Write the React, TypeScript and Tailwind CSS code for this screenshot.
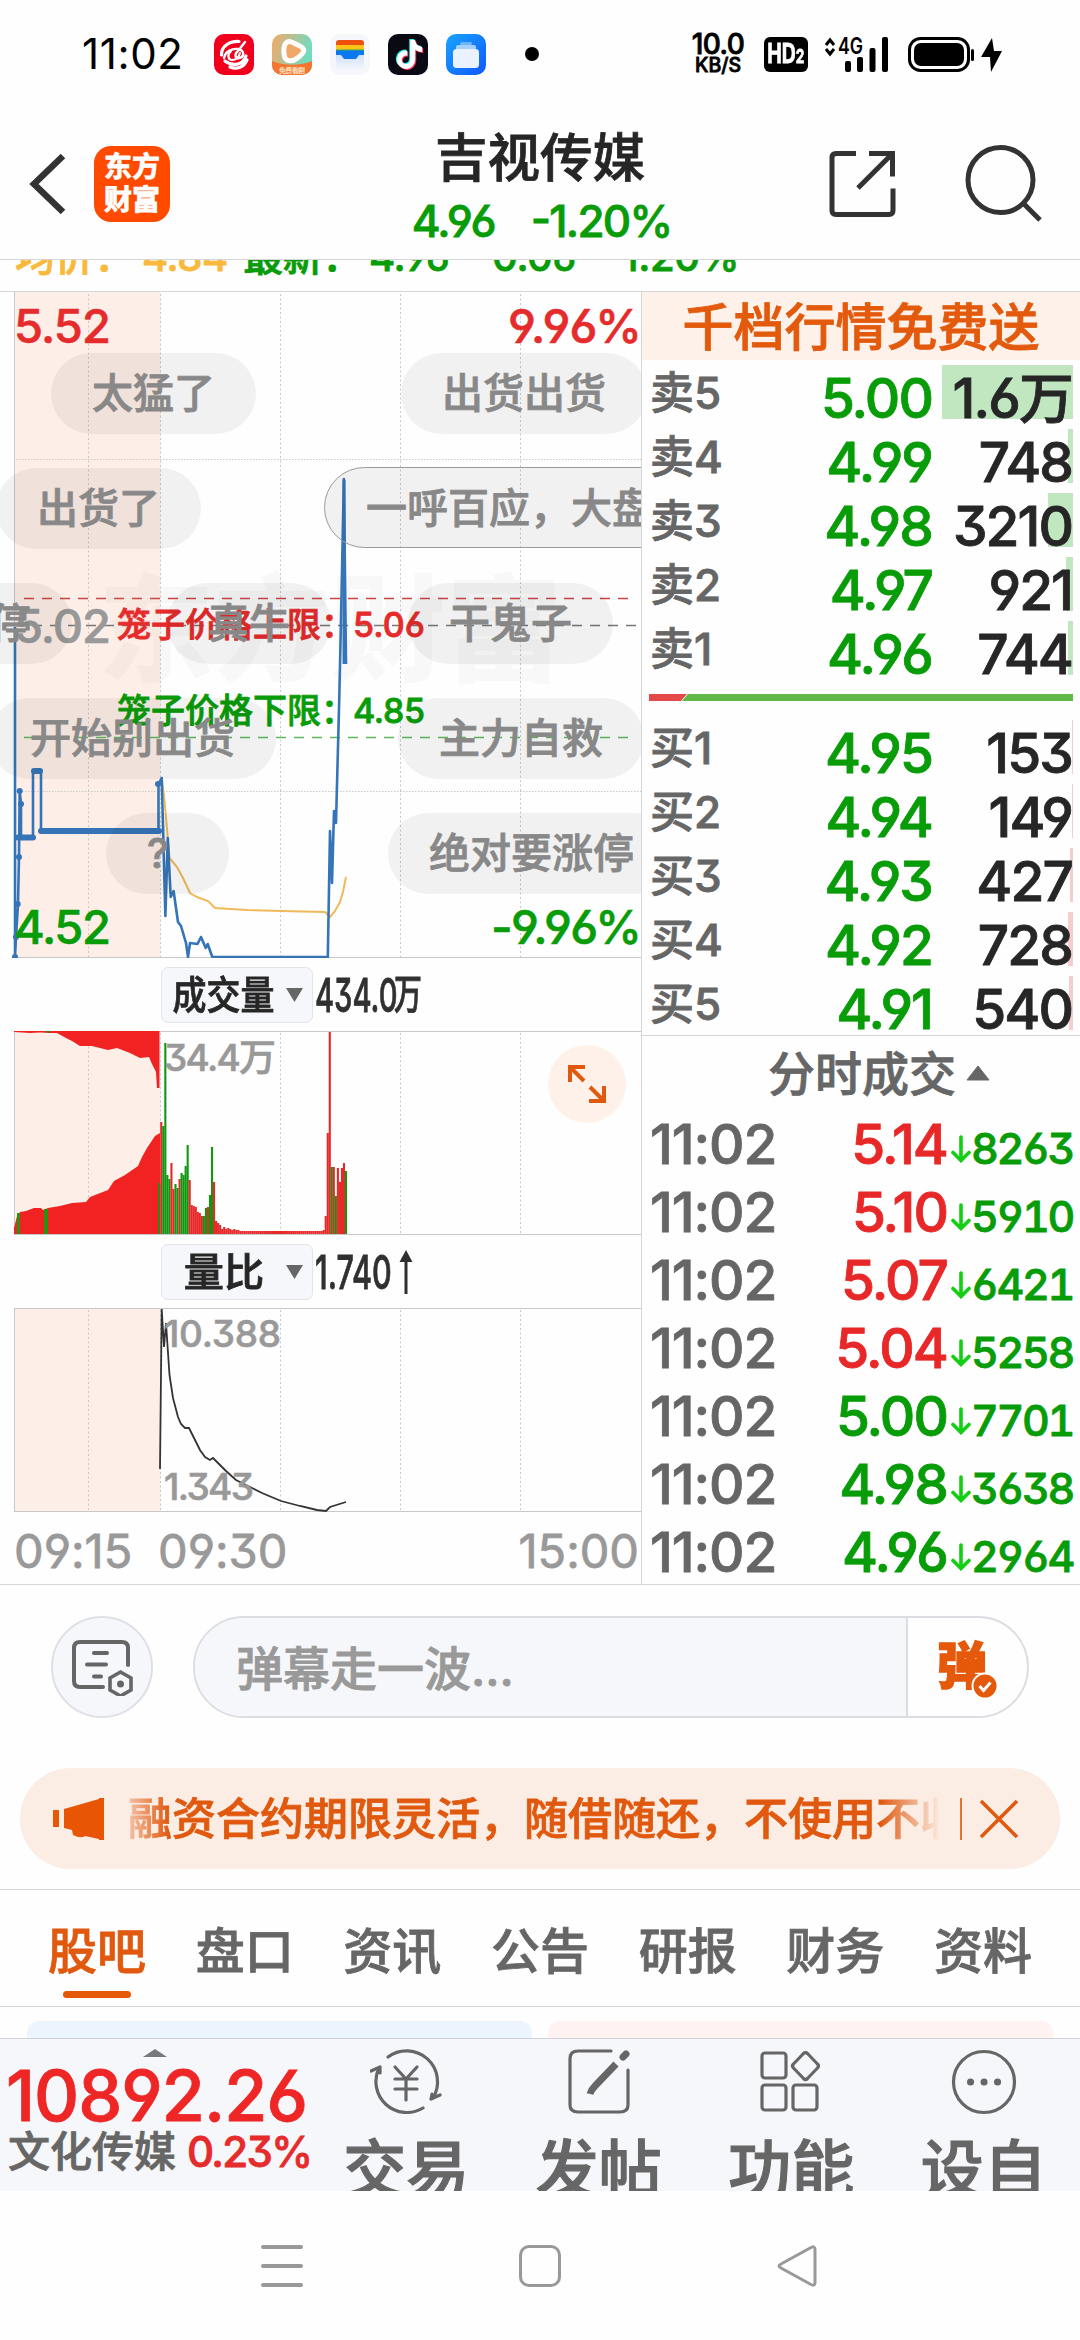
import { ReactNode } from "react";
import { FaTiktok } from "react-icons/fa";

interface Quote {
  label: string;
  price: string;
  vol: string;
  bar: number;
}

const SELLS: Quote[] = [
  { label: "卖5", price: "5.00", vol: "1.6万", bar: 131 },
  { label: "卖4", price: "4.99", vol: "748", bar: 5 },
  { label: "卖3", price: "4.98", vol: "3210", bar: 25 },
  { label: "卖2", price: "4.97", vol: "921", bar: 7 },
  { label: "卖1", price: "4.96", vol: "744", bar: 5 },
];

const BUYS: Quote[] = [
  { label: "买1", price: "4.95", vol: "153", bar: 1 },
  { label: "买2", price: "4.94", vol: "149", bar: 1 },
  { label: "买3", price: "4.93", vol: "427", bar: 3 },
  { label: "买4", price: "4.92", vol: "728", bar: 5 },
  { label: "买5", price: "4.91", vol: "540", bar: 4 },
];

const TICKS = [
  { price: "5.14", vol: "8263", up: true },
  { price: "5.10", vol: "5910", up: true },
  { price: "5.07", vol: "6421", up: true },
  { price: "5.04", vol: "5258", up: true },
  { price: "5.00", vol: "7701", up: false },
  { price: "4.98", vol: "3638", up: false },
  { price: "4.96", vol: "2964", up: false },
];

// Minute volume from 09:30, negative = falling minute
const VOLUMES = [
  -51, 112, -108, -191, -59, -55, 71, 45, -50, -46, 55, -61, -59, -68, -89, 54, 29, 28, 27, 22, 21, 18, -18, -26, 27,
  -39, -87, 52, 13, 11, 9, 5, 7, 5, 6, 5, 4, 5, 4, 4, ...Array(41).fill(3), 4, 18, 101, 202, -67, 67, -38, 66, 52, 66,
  71, -63,
];

const PILLS = [
  { text: "太猛了", x: 51, y: 353 },
  { text: "出货出货", x: 401, y: 353 },
  { text: "出货了", x: -4, y: 468 },
  { text: "一呼百应，大盘", x: 324, y: 467, outlined: true },
  { text: "涨停", x: -92, y: 583 },
  { text: "真牛", x: 167, y: 583 },
  { text: "干鬼子", x: 408, y: 583 },
  { text: "开始别出货", x: -11, y: 698 },
  { text: "主力自救", x: 398, y: 698 },
  { text: "?", x: 106, y: 813 },
  { text: "绝对要涨停", x: 388, y: 813 },
];

const GRID_X = [88.5, 160.5, 280.5, 400.5, 520.5];

const TABS = ["股吧", "盘口", "资讯", "公告", "研报", "财务", "资料"];

function StatusBar() {
  return (
    <div className="flex h-[108px] items-center pl-[82px]">
      <div className="w-[132px] text-[42px] leading-none font-normal tracking-[0.015em] text-black [-webkit-text-stroke:0px]">11:02</div>
      <div className="flex gap-[18px]">
        <svg width="40" height="41" viewBox="0 0 40 41">
          <rect width="40" height="41" rx="10" fill="#f0001c" />
          <g fill="none" stroke="#fff" strokeWidth="3.2" strokeLinecap="round">
            <path d="M25 7.500C15 7 7 13 7.500 21" />
            <path d="M10 24c1-6 8-10 14-9s7 7 2 9-6-4-2-7l7-9" strokeWidth="2.400" />
            <path d="M17 17c-4 3-3 9 1 9s7-3 8-7" strokeWidth="2.200" />
            <path d="M11 27c8 6 18 4 21-5M16 33c7 3 14 0 17-7" />
          </g>
        </svg>
        <svg width="40" height="41" viewBox="0 0 40 41">
          <defs>
            <linearGradient id="vid" x1="0" y1="0" x2="1" y2="0.3">
              <stop offset="0" stopColor="#f5a868" />
              <stop offset="1" stopColor="#6fdcc0" />
            </linearGradient>
          </defs>
          <rect width="40" height="41" rx="10" fill="url(#vid)" />
          <path d="M0 27c12 5 28 5 40 0v4a10 10 0 0 1-10 10H10A10 10 0 0 1 0 31z" fill="#f57430" />
          <path d="M14 9c3-3 6-1 12 2s8 5 3 10-10 7-14 5-4-14-1-17z" fill="#f0a868" stroke="#fff" strokeWidth="5" strokeLinejoin="round" />
          <text x="7" y="39" fontSize="7" fontWeight="700" fill="#ffe3c0" textLength="26">免费看剧</text>
        </svg>
        <svg width="40" height="41" viewBox="0 0 40 41">
          <defs>
            <linearGradient id="wal" x1="0" y1="0" x2="0" y2="1">
              <stop offset="0" stopColor="#cfdffb" />
              <stop offset="1" stopColor="#f6f7fb" />
            </linearGradient>
          </defs>
          <rect width="40" height="41" rx="10" fill="#f6f7fb" />
          <rect x="6" y="20" width="28" height="16" fill="url(#wal)" />
          <path d="M6 12V9q0-3 3-3h22q3 0 3 3v3z" fill="#ee5010" />
          <path d="M6 11h28v5H6z" fill="#fcc419" />
          <path d="M6 15.500h28v2H6z" fill="#3aa655" />
          <path d="M6 16.500h28v4.500h-5l-3 4H14l-3-4H6z" fill="#0a78f0" />
        </svg>
        <div className="relative h-[41px] w-10 rounded-[10px] bg-[#0a0a14]">
          <FaTiktok className="absolute top-[5px] left-[6px] text-[29px] text-[#25f4ee]" />
          <FaTiktok className="absolute top-[7px] left-[8px] text-[29px] text-[#fe2c55]" />
          <FaTiktok className="absolute top-[6px] left-[7px] text-[29px] text-white" />
        </div>
        <svg width="40" height="41" viewBox="0 0 40 41">
          <defs>
            <linearGradient id="fol" x1="0" y1="0" x2="1" y2="1">
              <stop offset="0" stopColor="#18a4ff" />
              <stop offset="1" stopColor="#1058fa" />
            </linearGradient>
          </defs>
          <rect width="40" height="41" rx="10" fill="url(#fol)" />
          <rect x="14" y="8" width="12" height="3" rx="1.500" fill="#6fb4ff" />
          <rect x="10" y="11" width="20" height="5" rx="2" fill="#a4cfff" />
          <rect x="7" y="15" width="26" height="19" rx="3.500" fill="#eaf2ff" />
        </svg>
      </div>
      <div className="ml-[39px] h-[14px] w-[14px] rounded-full bg-black" />
      <div className="ml-[149px] flex w-[60px] flex-col items-center font-medium text-black">
        <span className="text-[28px] leading-[23px] tracking-[-0.02em]">10.0</span>
        <span className="text-[19.500px] leading-[19px]">KB/S</span>
      </div>
      <div className="ml-[16px] flex h-[35px] w-[44px] items-center justify-center rounded-[6px] bg-black text-white">
        <span className="origin-center scale-x-[.72] text-[27px] font-bold whitespace-nowrap">
          HD<span className="text-[19px]">2</span>
        </span>
      </div>
      <svg className="ml-[16px]" width="180" height="40" viewBox="824 33 180 40">
        <path d="M826 44l4-5 4 5M826 48l4 5 4-5" fill="none" stroke="#000" strokeWidth="3" />
        <text x="838" y="53" fontSize="23" fontWeight="600" textLength="25" lengthAdjust="spacingAndGlyphs">4G</text>
        <rect x="845" y="60" width="6" height="11" rx="2" />
        <rect x="857" y="56" width="6" height="15" rx="2" />
        <rect x="869.500" y="47" width="6" height="24" rx="2" />
        <rect x="882" y="36" width="6" height="35" rx="2" />
        <rect x="909.500" y="37.500" width="59" height="32" rx="11" fill="none" stroke="#000" strokeWidth="3" />
        <rect x="914" y="42" width="50" height="23" rx="7" />
        <rect x="971" y="48" width="3" height="12" rx="1.500" />
        <path d="M992 37l-11 19h9l1 15 11-21h-8z" />
      </svg>
    </div>
  );
}

function Header() {
  return (
    <div className="flex h-[152px] items-center border-b border-[#d4d6d8] pr-[38px] pl-[28px]">
      <svg width="40" height="64" viewBox="28 152 40 64">
        <path d="M63 156L34 184l29 28" fill="none" stroke="#333" strokeWidth="6.500" />
      </svg>
      <div className="ml-[26px] flex h-[76px] w-[76px] flex-col items-center justify-center rounded-[17px] bg-[#ff4a00] text-[28px] leading-[33px] font-bold text-white">
        <span>东方</span>
        <span>财富</span>
      </div>
      <div className="ml-[200px] flex w-[340px] flex-col items-center pt-[9px]">
        <div className="text-[52.500px] leading-[60px] font-medium text-[#262626]">吉视传媒</div>
        <div className="mt-[5px] ml-[3px] flex gap-[36px] text-[44px] leading-[56px] font-medium tracking-[-0.04em] text-[#089c08] [font-feature-settings:'cv03','cv04','case']">
          <span>4.96</span>
          <span>-1.20%</span>
        </div>
      </div>
      <svg className="mt-[2px] ml-auto" width="214" height="84" viewBox="828 143 214 84" fill="none" stroke="#333" strokeWidth="5">
        <path d="M856 153.500h-20q-4 0-4 4v53q0 4 4 4h53q4 0 4-4v-22" />
        <path d="M869 153.500h23.500v23M892 154l-34 34" />
        <circle cx="1000.500" cy="180" r="32.500" />
        <path d="M1023 203l17 17" />
      </svg>
    </div>
  );
}

// Overlay line scrolled halfway under the header
function LegendStrip() {
  return (
    <div className="h-8 overflow-hidden border-b border-[#d4d6d8]">
      <div className="-mt-[29px] flex h-[52px] items-center text-[40px] leading-none font-medium tracking-[-0.01em] whitespace-nowrap text-[#089c08] [font-feature-settings:'cv03','cv04','case']">
        <span className="w-[128px] pl-[15px] text-[#f9b93c]">均价：</span>
        <span className="w-[100px] pl-[14px] text-[#f9b93c]">4.84</span>
        <span className="w-[126px] pl-[15px]">最新：</span>
        <span className="w-[120px] pl-[15px]">4.96</span>
        <span className="w-[130px]">-0.06</span>
        <span>-1.20%</span>
      </div>
    </div>
  );
}

function Grid({ top, bottom, children }: { top: number; bottom: number; children?: ReactNode }) {
  return (
    <g>
      <rect x="14" y={top} width="146.500" height={bottom - top} fill="#fdeee7" />
      {GRID_X.map((x) => (
        <path key={x} d={`M${x} ${top + 2}V${bottom}`} stroke="#c8c8c8" strokeDasharray="2 2.500" />
      ))}
      {children}
      <path d={`M14.500 ${top}V${bottom}`} stroke="#c8c8c8" />
      <path d={`M14 ${bottom + 0.5}H641`} stroke="#c8c8c8" />
    </g>
  );
}

function PriceChart() {
  return (
    <div className="relative h-[666px] overflow-hidden">
      <svg className="block" width="641" height="666" viewBox="0 292 641 666" fontWeight="500">
        <Grid top={292} bottom={957}>
          <path d="M16 459.500H641M16 791.500H641" stroke="#c8c8c8" strokeDasharray="1.500 1.500" />
        </Grid>
        <text x="98" y="672" fontSize="116" fontWeight="900" fill="#000" fillOpacity="0.025" textLength="464">东方财富</text>
        <path d="M24 598.500H629" stroke="#c44" strokeWidth="1.300" strokeDasharray="10 8" />
        <path d="M24 737.500H629" stroke="#5dbb5d" strokeWidth="1.300" strokeDasharray="10 8" />
        <path d="M14 625.500H641" stroke="#777" strokeWidth="1.500" strokeDasharray="10 8" />
        <path
          d="M161.700 778L164.500 800L169.500 858L177 867L183 878L190 893L197 897L208 901L215 908L247 910L281 911L325 912L330 917L335 911L340 902L343 892L346 877"
          fill="none"
          stroke="#f0b95a"
          strokeWidth="2"
        />
        <g fill="none" stroke="#3674b8" strokeLinejoin="round">
          <path
            d="M15 627V957L16 937L18 904L19 857L19.700 791L21 804V837H33V771H41V831H158.500V784L161.700 778L165.400 916L167.800 838L170.700 897L173.600 891L178 922L181 926L186 943L188 957L190 943L197.500 944L201 937L205.700 948L207.700 944L212.300 957H327.800L330 831L332 883L334 811L336 823L339.400 693L341 620L343.900 479L346 664"
            strokeWidth="2.600"
          />
          <path d="M18 837.500H33M34 771H40M41 831H159M158 784v0" strokeWidth="6" strokeLinecap="round" />
          <path d="M344 480V664" strokeWidth="3" />
        </g>
        <g fill="#3674b8">
          <circle cx="15" cy="957" r="3" />
          <circle cx="16" cy="937" r="3" />
          <circle cx="17.700" cy="904" r="3" />
          <circle cx="19" cy="857" r="3" />
          <circle cx="19.700" cy="791" r="3" />
          <circle cx="21" cy="804" r="3" />
        </g>
        <g fontSize="47" lengthAdjust="spacingAndGlyphs" strokeWidth="0.600">
          <text x="14" y="343" fill="#e52b2b" stroke="#e52b2b" textLength="97">5.52</text>
          <text x="508" y="343" fill="#e52b2b" stroke="#e52b2b" textLength="134">9.96%</text>
          <text x="14" y="643" fill="#999" stroke="#999" textLength="97">5.02</text>
          <text x="14" y="944" fill="#089c08" stroke="#089c08" textLength="97">4.52</text>
          <text x="491" y="944" fill="#089c08" stroke="#089c08" textLength="151">-9.96%</text>
        </g>
        <g fontSize="34" strokeWidth="0.800">
          <text x="117" y="637" fill="#e52b2b" stroke="#e52b2b">笼子价格上限：</text>
          <text x="353" y="637" fill="#e52b2b" stroke="#e52b2b" textLength="72">5.06</text>
          <text x="117" y="723" fill="#089c08" stroke="#089c08">笼子价格下限：</text>
          <text x="353" y="723" fill="#089c08" stroke="#089c08" textLength="72">4.85</text>
        </g>
      </svg>
      {PILLS.map((p) => (
        <div
          key={p.text}
          className={`absolute h-[81px] min-w-[123px] rounded-full bg-black/5 px-[41px] text-[41px] leading-[81px] font-medium whitespace-nowrap text-[#888] ${
            p.outlined ? "border border-[#999]" : ""
          }`}
          style={{ left: p.x, top: p.y - 292 }}
        >
          {p.text}
        </div>
      ))}
    </div>
  );
}

function IndicatorHeader({ name, children }: { name: string; children: ReactNode }) {
  return (
    <div className="flex h-[73px] items-center pl-[161px]">
      <div className="flex h-[56px] w-[152px] items-center justify-between rounded-[7px] border border-[#e3e5e9] bg-[#f6f7fa] pr-[9px]">
        <span className="flex w-[124px] justify-center">
          <span
            className={`text-[39px] leading-none font-medium whitespace-nowrap text-[#262626] ${
              name.length > 2 ? "scale-x-[.87]" : "scale-x-[1.03]"
            }`}
          >
            {name}
          </span>
        </span>
        <svg width="17" height="14" viewBox="0 0 17 14">
          <path d="M0 0h17L8.500 14z" fill="#666" />
        </svg>
      </div>
      <div className="ml-[2px] flex items-center text-[#303030]">{children}</div>
    </div>
  );
}

function VolumeChart() {
  return (
    <div className="relative h-[204px]">
      <svg className="block" width="641" height="204" viewBox="0 1031 641 204">
        <Grid top={1031} bottom={1234} />
        <path d="M14 1031.500H641" stroke="#c8c8c8" />
        <g fill="#f02222">
          <path d="M14 1031H159.500V1088H157L156 1072L152 1064L149 1057L140 1058L130 1053L117 1048L108 1050L92 1046H80L72 1041L66 1038L57 1033H50L40 1032.500L30 1033L14 1032z" />
          <path d="M14 1234V1228L17 1216L20 1212L26 1211L34 1208H41L43 1210L48 1208L60 1206L72 1203L86 1202L90 1197L108 1190L114 1181L125 1175L138 1166L142 1157L147 1148L155 1136L160 1133V1234z" />
        </g>
        <path d="M17 1213h3v21h-3zM44 1209h4v25h-4zM46 1031h4v1.500h-4z" fill="#2c9010" />
        {VOLUMES.map((v, i) => (
          <rect
            key={i}
            x={158.200 + i * 2.030}
            y={1234 - Math.abs(v)}
            width="2.100"
            height={Math.abs(v)}
            fill={v > 0 ? "#e82828" : "#0f980f"}
          />
        ))}
        <text x="164" y="1071" fontSize="37" fontWeight="500" fill="#999" stroke="#999" strokeWidth="0.600" textLength="112">34.4万</text>
      </svg>
      {/* Full screen toggle */}
      <div className="absolute top-[14px] right-[15px] flex h-[78px] w-[78px] items-center justify-center rounded-full bg-[#fef1e9]">
        <svg width="40" height="40" viewBox="567 1064 40 40" fill="none" stroke="#e0590f" strokeWidth="4">
          <path d="M585 1067H570V1082M570 1067l14 14M589 1101H604V1086M604 1101l-14-14" />
        </svg>
      </div>
    </div>
  );
}

function RatioChart() {
  return (
    <svg className="block" width="641" height="204" viewBox="0 1308 641 204">
      <Grid top={1308} bottom={1511} />
      <path d="M14 1308.500H641" stroke="#c8c8c8" />
      <path
        d="M160 1469L161.700 1309L164 1347L166 1323L169.500 1375L173 1398L178 1417L181 1424L185 1428H189L194 1438L200 1450L205 1457L210 1460L213 1458L218 1463L226 1471L236 1480L250 1487L262 1493L281 1501L300 1506L317 1510L326 1511L330 1507L346 1502"
        fill="none"
        stroke="#333"
        strokeWidth="1.800"
      />
      <g fontSize="37" fontWeight="500" fill="#999" stroke="#999" strokeWidth="0.600">
        <text x="164" y="1347" textLength="117">10.388</text>
        <text x="164" y="1500" textLength="90">1.343</text>
      </g>
    </svg>
  );
}

function ChartPanel() {
  return (
    <div className="flex w-[642px] flex-col border-r border-[#d4d6d8]">
      <PriceChart />
      <IndicatorHeader name="成交量">
        <span className="w-[79px] origin-left scale-x-[.62] text-[47px] leading-none font-medium whitespace-nowrap">434.0</span>
        <span className="origin-left scale-x-[.68] text-[41px] leading-none font-medium">万</span>
      </IndicatorHeader>
      <VolumeChart />
      <IndicatorHeader name="量比">
        <span className="w-[84px] origin-left scale-x-[.65] text-[47px] leading-none font-medium whitespace-nowrap">1.740</span>
        <svg width="14" height="44" viewBox="0 0 14 44">
          <path d="M7 0l6.500 12h-5v32h-3V12h-5z" fill="#303030" />
        </svg>
      </IndicatorHeader>
      <RatioChart />
      <div className="flex h-[72px] items-center pt-1 pr-[2px] pl-[14px] text-[47px] leading-none text-[#999]">
        <span className="w-[144px]">09:15</span>
        <span>09:30</span>
        <span className="ml-auto">15:00</span>
      </div>
    </div>
  );
}

function QuoteRow({ q, sell }: { q: Quote; sell?: boolean }) {
  return (
    <div className="relative flex h-16 shrink-0 pr-[8px] pl-[8px] font-medium">
      <div
        className={`absolute top-0 right-[7px] h-[54px] ${sell ? "bg-[#c0e7c0]" : "bg-[#f6cccc]"}`}
        style={{ width: q.bar }}
      />
      <span className="relative text-[44px] leading-[56px] text-[#666]">{q.label}</span>
      <span className="relative ml-auto text-[55px] leading-[66px] tracking-[-0.035em] text-[#089c08]">{q.price}</span>
      <span className="relative w-[140px] text-right text-[55px] leading-[66px] tracking-[-0.035em] whitespace-nowrap text-[#262626]">
        {q.vol}
      </span>
    </div>
  );
}

function OrderBook() {
  return (
    <div className="flex w-[438px] flex-col overflow-hidden">
      <div className="mb-[5px] flex h-[68px] shrink-0 items-center justify-center bg-[#fdf1ea] text-[51px] leading-[68px] font-medium text-[#e35a0c]">
        <span className="pt-[3px]">千档行情免费送</span>
      </div>
      {SELLS.map((q) => (
        <QuoteRow key={q.label} q={q} sell />
      ))}
      <svg className="mt-[9px] mb-[19px] ml-[7px] block shrink-0" width="424" height="7" viewBox="0 0 424 7">
        <path d="M0 0H38L32 7H0z" fill="#e54848" />
        <path d="M39 0H424V7H33z" fill="#5fb848" />
      </svg>
      <div className="flex h-[316px] shrink-0 flex-col overflow-hidden border-b border-[#d4d6d8]">
        {BUYS.map((q) => (
          <QuoteRow key={q.label} q={q} />
        ))}
      </div>
      <div className="flex h-[74px] shrink-0 items-center justify-center gap-[10px] pl-[36px] text-[47px] leading-none font-medium text-[#666]">
        分时成交
        <svg width="24" height="16" viewBox="0 0 24 16">
          <path d="M12 1L23 15H1z" fill="#666" stroke="#666" strokeLinejoin="round" />
        </svg>
      </div>
      {TICKS.map((t) => (
        <div key={t.price} className="flex h-[68px] shrink-0 items-center pr-[8px] pl-[8px] leading-none font-medium">
          <span className="text-[55px] tracking-[-0.02em] text-[#666]">11:02</span>
          <span className={`ml-auto text-[55px] tracking-[-0.035em] ${t.up ? "text-[#e82828]" : "text-[#089c08]"}`}>{t.price}</span>
          <svg className="mt-[9px] ml-[4px]" width="20" height="28" viewBox="0 0 20 28">
            <path d="M10 2V25M2 17.500l8 8 8-8" fill="none" stroke="#12cf12" strokeWidth="3.600" strokeLinecap="round" />
          </svg>
          <span className="mt-[8px] w-[101px] text-right text-[43px] tracking-[-0.055em] text-[#089c08] [font-feature-settings:'cv03','cv04','cv09','tnum']">
            {t.vol}
          </span>
        </div>
      ))}
    </div>
  );
}

function DanmakuBar() {
  return (
    <div className="flex h-[152px] items-end pl-[51px]">
      <div className="mb-[19px] flex h-[102px] w-[102px] items-center justify-center rounded-full border-2 border-[#dfe0e6] bg-[#f6f7fa]">
        <svg width="64" height="58" viewBox="71 1638 64 58" fill="none" stroke="#666" strokeWidth="4" strokeLinecap="round">
          <path d="M104 1687H81q-6 0-6-6V1648q0-6 6-6h42q6 0 6 6v17" />
          <path d="M95 1653h13M88 1664.500h19M95 1676.500h7" />
          <path d="M121.500 1672l10.500 6v12l-10.500 6-10.500-6v-12z" strokeWidth="3.600" />
          <circle cx="121.500" cy="1684" r="2.500" fill="#666" strokeWidth="2" />
        </svg>
      </div>
      <div className="mb-[19px] ml-10 flex h-[102px] w-[836px] overflow-hidden rounded-full border-2 border-[#dcdde2]">
        <div className="flex-1 border-r-2 border-[#dcdde2] bg-[#f6f7fa] pl-[41px] text-[47px] leading-[102px] font-medium text-[#999]">
          弹幕走一波...
        </div>
        <div className="relative w-[119px] pl-[29px] text-[50px] leading-[96px] font-black text-[#e5590b] [-webkit-text-stroke:1.6px]">
          弹
          <svg className="absolute top-[54px] left-[63px]" width="28" height="28" viewBox="0 0 28 28">
            <circle cx="14" cy="14" r="12.500" fill="#e5590b" stroke="#fff" strokeWidth="2" />
            <path d="M8.500 14l4 4.500 7-8" fill="none" stroke="#fff" strokeWidth="3" />
          </svg>
        </div>
      </div>
    </div>
  );
}

function Notice() {
  return (
    <div className="mx-5 mt-[31px] flex h-[101px] shrink-0 items-center rounded-full bg-[#fcede4] pl-[33px]">
      <svg width="54" height="46" viewBox="0 0 54 46" fill="#e85504">
        <path d="M0 14h6v17H0zM11 13L46 3V2h5v42h-5v-1l-14-3q-4 3-12-1l-1-5-8-2z" />
      </svg>
      <div className="ml-[21px] w-[817px] overflow-hidden text-[44px] leading-[60px] font-medium whitespace-nowrap text-[#e0590f] [mask-image:linear-gradient(to_right,transparent_-2%,black_5%,black_92%,transparent_99.5%)]">
        融资合约期限灵活，随借随还，不使用不收费
      </div>
      <div className="ml-[15px] h-[42px] w-[2px] bg-[#e0762f]" />
      <svg className="ml-[17px]" width="40" height="40" viewBox="0 0 40 40">
        <path d="M2 2l36 36M38 2L2 38" stroke="#e0590f" strokeWidth="3.600" />
      </svg>
    </div>
  );
}

function Tabs() {
  return (
    <div className="mt-5 flex h-[118px] shrink-0 justify-between border-y border-[#d4d6d8] px-[48px] text-[49px] leading-[123px] font-medium text-[#666]">
      {TABS.map((t, i) => (
        <div key={t} className={i === 0 ? "relative text-[#e0590f]" : ""}>
          {t}
          {i === 0 && <div className="absolute bottom-[8px] left-[15px] h-[7px] w-[68px] rounded-full bg-[#e5590b]" />}
        </div>
      ))}
    </div>
  );
}

const ACTIONS = [
  {
    name: "交易",
    icon: (
      <>
        <path d="M18 9A31 31 0 0 1 63 50" />
        <path d="M61 51l9-4M61 51l1-5" />
        <path d="M53 60A31 31 0 0 1 9 20M10 19L1 23M10 19v6" />
        <path d="M25 19l11 12 11-12M25 31h22M25 41h22M36 31v21" />
      </>
    ),
  },
  {
    name: "发帖",
    icon: (
      <>
        <path d="M48 3H15q-8 0-8 8v46q0 7 8 7h42q8 0 8-7V22" />
        <path d="M53 16L32 38q-4 4-5 8" strokeWidth="7" strokeLinecap="butt" />
        <path d="M60 9l3-3" strokeWidth="7" strokeLinecap="round" />
      </>
    ),
  },
  {
    name: "功能",
    icon: (
      <>
        <rect x="7" y="5" width="24" height="25" rx="3" />
        <rect x="7" y="37" width="24" height="25" rx="3" />
        <rect x="38" y="37" width="24" height="25" rx="3" />
        <path d="M48.500 5.500q2-2 4 0l10 10.500q2 2 0 4l-10 10.500q-2 2-4 0l-10-10.500q-2-2 0-4z" />
      </>
    ),
  },
  {
    name: "设自",
    icon: (
      <>
        <circle cx="36" cy="34" r="30.500" />
        <path d="M22.500 34h.1M36 34h.1M49.500 34h.1" strokeWidth="7" strokeLinecap="round" />
      </>
    ),
  },
];

function BottomBar() {
  return (
    <div className="flex h-[153px] shrink-0 overflow-hidden border-t border-[#d0d2d8] bg-[#f6f7fa]">
      <div className="w-[310px] pl-[6px]">
        <svg className="mt-[10px] ml-[137px] block" width="24" height="8" viewBox="0 0 24 8">
          <path d="M12 0L24 8H0z" fill="#77787c" />
        </svg>
        <div className="mt-[3px] text-[70px] leading-[72px] font-medium tracking-[-0.014em] text-[#ef2626]">10892.26</div>
        <div className="-mt-[3px] flex items-center gap-[11px] pl-[2px] text-[42px] leading-[46px] font-medium whitespace-nowrap text-[#666]">
          文化传媒
          <span className="tracking-[-0.04em] text-[#e52b2b]">0.23%</span>
        </div>
      </div>
      <div className="flex">
        {ACTIONS.map((a) => (
          <div key={a.name} className="flex w-[192.500px] flex-col items-center">
            <svg className="mt-[9px] shrink-0" width="72" height="68" viewBox="0 0 72 68" fill="none" stroke="#666" strokeWidth="3.200" strokeLinecap="round">
              {a.icon}
            </svg>
            <span className="mt-[15px] text-[63px] leading-[76px] font-medium whitespace-nowrap text-[#666] [-webkit-text-stroke:1.2px]">{a.name}</span>
          </div>
        ))}
      </div>
    </div>
  );
}

function SystemNav() {
  return (
    <div className="flex h-[149px] shrink-0 items-center justify-between bg-[#fefefe] pr-[261px] pl-[261px]">
      <svg width="42" height="42" viewBox="0 0 42 42" stroke="#999" strokeWidth="4" strokeLinecap="round">
        <path d="M2 2h38M2 21h38M2 40h38" />
      </svg>
      <div className="h-[42px] w-[42px] rounded-[10px] border-[3px] border-[#999]" />
      <svg width="42" height="42" viewBox="0 0 42 42" fill="none" stroke="#999" strokeWidth="3" strokeLinejoin="round">
        <path d="M34 2.500q4-2 4 2v33q0 4-4 2L4 23q-4-2 0-4z" />
      </svg>
    </div>
  );
}

export default function App() {
  return (
    <div className="flex h-[2340px] w-[1080px] flex-col overflow-hidden bg-[#fefefe] font-['Inter','Noto_Sans_CJK_SC',sans-serif] [-webkit-text-stroke:0.8px] [font-feature-settings:'cv03','cv04','cv09','calt'_0]">
      <StatusBar />
      <Header />
      <LegendStrip />
      <div className="flex h-[1293px] shrink-0 border-b border-[#d4d6d8]">
        <ChartPanel />
        <OrderBook />
      </div>
      <DanmakuBar />
      <Notice />
      <Tabs />
      <div className="flex h-[31px] shrink-0 gap-4 overflow-hidden px-[27px] pt-[14px]">
        <div className="h-20 w-[505px] rounded-xl bg-[#ecf4fd]" />
        <div className="h-20 w-[505px] rounded-xl bg-[#fef3f2]" />
      </div>
      <BottomBar />
      <SystemNav />
    </div>
  );
}
